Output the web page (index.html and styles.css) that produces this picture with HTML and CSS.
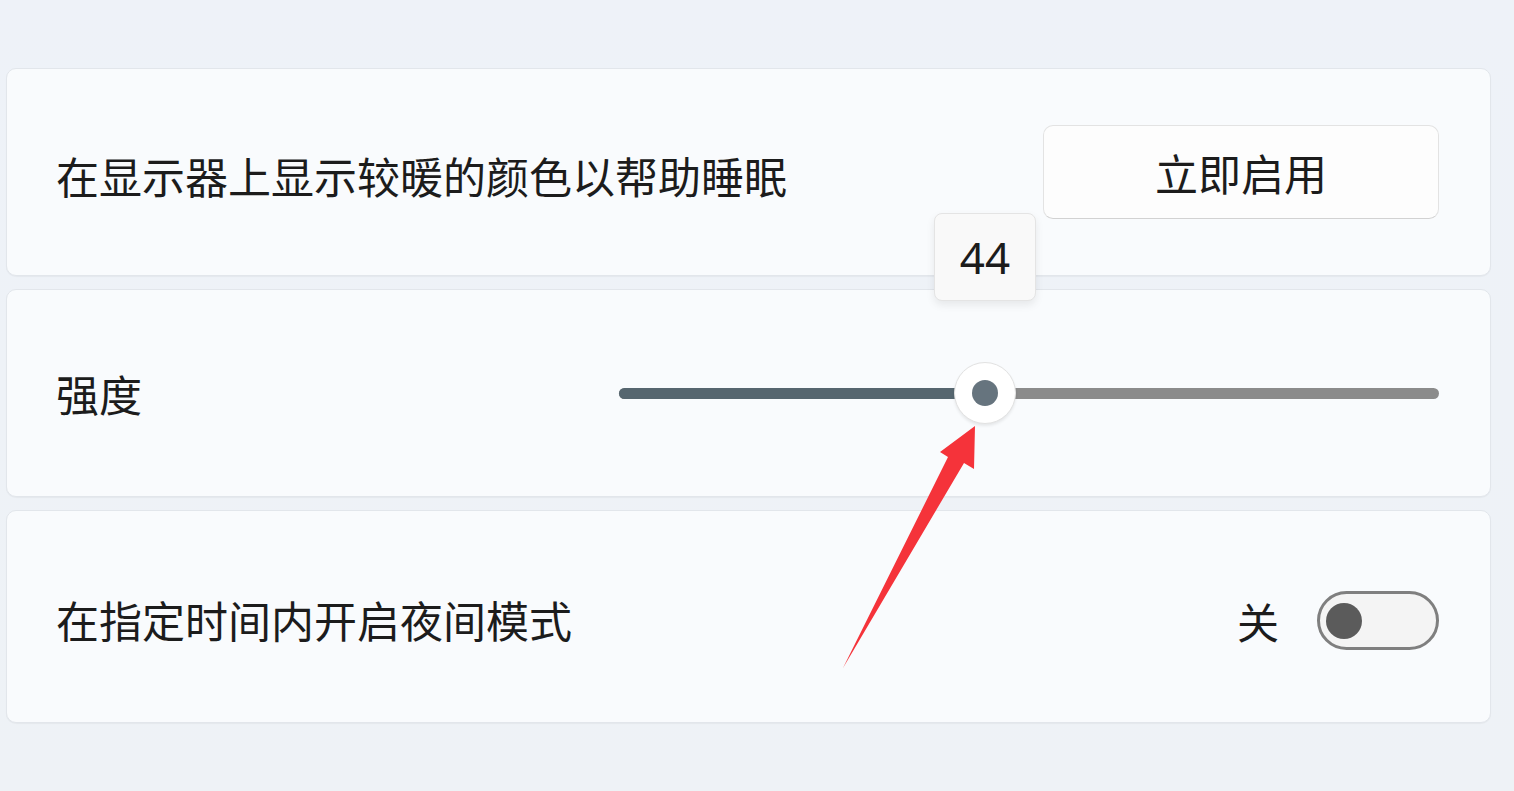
FILE: index.html
```html
<!DOCTYPE html>
<html>
<head>
    <title>夜间模式</title>
    <link rel="stylesheet" href="styles.css">
</head>
<body>
    <div class="settings">
        <div class="card">
            <span class="label">在显示器上显示较暖的颜色以帮助睡眠</span>
            <button class="btn">立即启用</button>
        </div>

        <div class="card card-slider">
            <span class="label">强度</span>
            <div class="slider">
                <div class="track">
                    <div class="fill" style="width: 44.5%"></div>
                    <div class="thumb" style="left: 44.5%">
                        <div class="tip">44</div>
                        <div class="dot"></div>
                    </div>
                </div>
            </div>
        </div>

        <div class="card card-tall">
            <span class="label">在指定时间内开启夜间模式</span>
            <div class="toggle-wrap">
                <span class="state">关</span>
                <div class="toggle"><div class="knob"></div></div>
            </div>
        </div>
    </div>

    <!-- red annotation arrow -->
    <svg class="arrow" width="1514" height="791" viewBox="0 0 1514 791">
        <polygon points="843,668 948,457 940,452 975,426 974,469 964,463" fill="#f5333a"/>
    </svg>
</body>
</html>
```

FILE: styles.css
```css
body {
    margin: 0;
    padding: 68px 23px 0 6px;
    height: 791px;
    box-sizing: border-box;
    background: linear-gradient(180deg, #eef2f8 0%, #eef2f6 100%);
    font-family: "Noto Sans CJK SC", "Noto Sans", sans-serif;
    color: #1c1c1c;
    overflow: hidden;
}
.settings {
    display: flex;
    flex-direction: column;
    gap: 13px;
}
.card {
    height: 208px;
    box-sizing: border-box;
    display: flex;
    align-items: center;
    justify-content: space-between;
    padding: 6px 51px 0 49px;
    background: #f9fbfd;
    border: 1px solid #e2e6eb;
    border-radius: 10px;
    box-shadow: 0 1px 1px rgba(0, 0, 0, 0.04);
}
.card-slider {
    padding-top: 0;
    position: relative;
    z-index: 2;
}
.card-tall {
    height: 213px;
}
.label {
    font-size: 43px;
    line-height: 1;
}
.btn {
    width: 396px;
    height: 94px;
    margin-top: -6px;
    background: #fdfdfd;
    border: 1px solid #e3e3e3;
    border-bottom-color: #d2d2d2;
    border-radius: 10px;
    font-family: "Noto Sans CJK SC", sans-serif;
    font-size: 43px;
    color: #1c1c1c;
}
.slider {
    width: 820px;
    padding: 26px 0;
}
.track {
    position: relative;
    height: 11px;
    border-radius: 6px;
    background: #8b8b8b;
}
.fill {
    height: 100%;
    border-radius: 6px 0 0 6px;
    background: #56666f;
}
.thumb {
    position: absolute;
    top: 50%;
    width: 60px;
    height: 60px;
    margin: -31px 0 0 -30px;
    border-radius: 50%;
    background: #ffffff;
    border: 1px solid #e2e2e2;
    box-shadow: 0 2px 3px rgba(0, 0, 0, 0.08);
    display: flex;
    align-items: center;
    justify-content: center;
}
.dot {
    width: 26px;
    height: 26px;
    border-radius: 50%;
    background: #66747e;
}
.tip {
    position: absolute;
    bottom: 122px;
    left: 50%;
    width: 100px;
    height: 86px;
    margin-left: -51px;
    display: flex;
    align-items: center;
    justify-content: center;
    background: #f9f9f9;
    border: 1px solid #e4e4e4;
    border-radius: 8px;
    box-shadow: 0 4px 8px rgba(0, 0, 0, 0.08);
    font-family: "Noto Sans", sans-serif;
    font-size: 44px;
    color: #1c1c1c;
}
.toggle-wrap {
    display: flex;
    align-items: center;
    gap: 38px;
    margin-top: 2px;
}
.state {
    font-size: 42px;
}
.toggle {
    width: 122px;
    height: 59px;
    box-sizing: border-box;
    border: 3px solid #7f7f7f;
    border-radius: 30px;
    background: #f4f4f4;
    display: flex;
    align-items: center;
    padding-left: 6px;
}
.knob {
    width: 36px;
    height: 36px;
    border-radius: 50%;
    background: #5b5b5b;
}
.arrow {
    position: absolute;
    left: 0;
    top: 0;
    z-index: 5;
    pointer-events: none;
}
```
